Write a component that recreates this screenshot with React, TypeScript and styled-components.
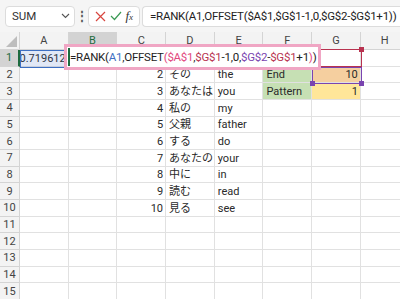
import React from "react";
import styled, { createGlobalStyle } from "styled-components";

const GlobalStyle = createGlobalStyle`
  html, body { margin: 0; padding: 0; background: #fff; }
  body { font-family: Roboto, "Noto Sans CJK JP", sans-serif; overflow: hidden; }
`;

const COL_W = 48.7;
const ROW_H = 16.67;
const HEAD_H = 18;
const ROWHEAD_W = 20;
const COLS = ["A", "B", "C", "D", "E", "F", "G", "H"];

const REF_BLUE = "#3d6fc2";
const REF_PINK = "#e2477e";
const REF_RED = "#b8324f";
const REF_PURPLE = "#7a44b0";

type Seg = { t: string; c?: string };
const formula: Seg[] = [
  { t: "=RANK(" },
  { t: "A1", c: REF_BLUE },
  { t: ",OFFSET" },
  { t: "(", c: REF_PINK },
  { t: "$A$1", c: REF_PINK },
  { t: "," },
  { t: "$G$1", c: REF_RED },
  { t: "-1,0," },
  { t: "$G$2", c: REF_PURPLE },
  { t: "-" },
  { t: "$G$1", c: REF_RED },
  { t: "+1" },
  { t: ")", c: REF_PINK },
  { t: ")" },
];

const data: Record<number, { n: string; jp: string; en: string }> = {
  2: { n: "2", jp: "その", en: "the" },
  3: { n: "3", jp: "あなたは", en: "you" },
  4: { n: "4", jp: "私の", en: "my" },
  5: { n: "5", jp: "父親", en: "father" },
  6: { n: "6", jp: "する", en: "do" },
  7: { n: "7", jp: "あなたの", en: "your" },
  8: { n: "8", jp: "中に", en: "in" },
  9: { n: "9", jp: "読む", en: "read" },
  10: { n: "10", jp: "見る", en: "see" },
};

const Page = styled.div`
  width: 400px;
  height: 299px;
  overflow: hidden;
  display: flex;
  flex-direction: column;
`;

const Toolbar = styled.div`
  height: 32px;
  flex: none;
  background: #f5f5f5;
  display: flex;
  align-items: center;
  padding: 0 0 0 5px;
`;

const Box = styled.div`
  height: 21px;
  background: #fff;
  border: 1px solid #dcdcdc;
  border-radius: 4px;
  box-sizing: border-box;
  display: flex;
  align-items: center;
`;

const NameBox = styled(Box)`
  width: 70px;
  padding: 0 4px 0 6px;
  justify-content: space-between;
  font-size: 11.5px;
  color: #333;
`;

const Dots = styled.div`
  width: 13px;
  text-align: center;
  color: #555;
  font-size: 12px;
  font-weight: bold;
  line-height: 1;
`;

const FxBox = styled(Box)`
  width: 52px;
  padding: 0 4px;
  justify-content: space-around;
`;

const FxLabel = styled.span`
  font-family: "Liberation Serif", serif;
  font-style: italic;
  font-size: 13px;
  color: #333;
  & > sub {
    font-size: 9px;
    vertical-align: baseline;
  }
`;

const FormulaBox = styled(Box)`
  flex: 1;
  margin-left: 2px;
  padding-left: 7px;
  border-right: none;
  border-radius: 4px 0 0 4px;
  font-size: 11.5px;
  letter-spacing: -0.25px;
  color: #222;
  white-space: nowrap;
  overflow: hidden;
`;

const Sheet = styled.div`
  position: relative;
  display: grid;
  grid-template-columns: ${ROWHEAD_W}px repeat(${COLS.length}, ${COL_W}px);
  grid-template-rows: ${HEAD_H}px;
  grid-auto-rows: ${ROW_H}px;
  font-size: 11px;
  color: #2a2a2a;
`;

const Corner = styled.div`
  position: relative;
  background: #f3f3f3;
  border-right: 1px solid #d4d4d4;
  border-bottom: 1px solid #d4d4d4;
  box-sizing: border-box;
  &::after {
    content: "";
    position: absolute;
    right: 2px;
    bottom: 2px;
    border-left: 11px solid transparent;
    border-bottom: 11px solid #bdbdbd;
  }
`;

const ColHead = styled.div<{ $sel?: boolean }>`
  background: ${(p) => (p.$sel ? "#d3d3d3" : "#f3f3f3")};
  color: ${(p) => (p.$sel ? "#1d6b3f" : "#444")};
  border-right: 1px solid #d4d4d4;
  border-bottom: ${(p) => (p.$sel ? "2px solid #1d6b3f" : "1px solid #d4d4d4")};
  box-sizing: border-box;
  display: flex;
  align-items: center;
  justify-content: center;
  font-size: 11px;
`;

const RowHead = styled.div<{ $sel?: boolean }>`
  background: ${(p) => (p.$sel ? "#d3d3d3" : "#f3f3f3")};
  color: ${(p) => (p.$sel ? "#1d6b3f" : "#444")};
  border-right: ${(p) => (p.$sel ? "2px solid #1d6b3f" : "1px solid #d4d4d4")};
  border-bottom: 1px solid #d4d4d4;
  box-sizing: border-box;
  display: flex;
  align-items: center;
  justify-content: center;
  font-size: 11px;
`;

const Cell = styled.div<{ $bg?: string; $right?: boolean }>`
  background: ${(p) => p.$bg || "#fff"};
  border-right: 1px solid #e1e1e1;
  border-bottom: 1px solid #e1e1e1;
  box-sizing: border-box;
  display: flex;
  align-items: center;
  justify-content: ${(p) => (p.$right ? "flex-end" : "flex-start")};
  padding: 1px 2px 0 3px;
  white-space: nowrap;
  overflow: hidden;
  line-height: 1;
`;

const RefBox = styled.div<{ $color: string; $fill?: string }>`
  position: absolute;
  box-sizing: border-box;
  border: 1px solid ${(p) => p.$color};
  background: ${(p) => p.$fill || "transparent"};
  pointer-events: none;
`;

const Handle = styled.div<{ $color: string }>`
  position: absolute;
  width: 5px;
  height: 5px;
  background: ${(p) => p.$color};
`;

const ActiveCell = styled.div`
  position: absolute;
  box-sizing: border-box;
  border: 2px solid #1d6b3f;
`;

const EditBox = styled.div`
  position: absolute;
  left: 64px;
  top: 12px;
  width: 257px;
  height: 26px;
  box-sizing: border-box;
  border: 3px solid #f0a6c4;
  background: #fff;
  display: flex;
  align-items: center;
  padding-left: 3px;
  font-size: 11.5px;
  letter-spacing: -0.25px;
  color: #222;
  white-space: nowrap;
  overflow: hidden;
`;

const EditCaretLine = styled.div`
  position: absolute;
  left: 1px;
  top: 1px;
  bottom: 1px;
  width: 2px;
  background: #1d6b3f;
`;

const cellX = (c: number) => ROWHEAD_W + c * COL_W;
const cellY = (r: number) => HEAD_H + (r - 1) * ROW_H;

function Formula({ colored }: { colored: boolean }) {
  return (
    <>
      {formula.map((s, i) => (
        <span key={i} style={colored && s.c ? { color: s.c } : undefined}>
          {s.t}
        </span>
      ))}
    </>
  );
}

function cellContent(r: number, c: number) {
  const col = COLS[c];
  const d = data[r];
  if (r === 1 && col === "A") return <Cell key={c} $right>0.719612</Cell>;
  if (r === 2 && col === "F") return <Cell key={c} $bg="#c6e0b4">End</Cell>;
  if (r === 3 && col === "F") return <Cell key={c} $bg="#c6e0b4">Pattern</Cell>;
  if (r === 2 && col === "G") return <Cell key={c} $bg="#f5cf9f" $right>10</Cell>;
  if (r === 3 && col === "G") return <Cell key={c} $bg="#ffe699" $right>1</Cell>;
  if (d && col === "C") return <Cell key={c} $right>{d.n}</Cell>;
  if (d && col === "D") return <Cell key={c}>{d.jp}</Cell>;
  if (d && col === "E") return <Cell key={c}>{d.en}</Cell>;
  return <Cell key={c} />;
}

export default function App() {
  const rows = Array.from({ length: 15 }, (_, i) => i + 1);
  return (
    <Page>
      <GlobalStyle />
      <Toolbar>
        <NameBox>
          <span>SUM</span>
          <svg width="9" height="6" viewBox="0 0 9 6">
            <path d="M1 1l3.5 3.5L8 1" fill="none" stroke="#555" strokeWidth="1.1" />
          </svg>
        </NameBox>
        <Dots>⋮</Dots>
        <FxBox>
          <svg width="11" height="11" viewBox="0 0 11 11">
            <path d="M1 1l9 9M10 1l-9 9" stroke="#d8463f" strokeWidth="1.2" />
          </svg>
          <svg width="12" height="10" viewBox="0 0 12 10">
            <path d="M1 5l3.5 3.5L11 1" fill="none" stroke="#3b9a55" strokeWidth="1.2" />
          </svg>
          <FxLabel>
            f<sub>x</sub>
          </FxLabel>
        </FxBox>
        <FormulaBox>
          <Formula colored={false} />
        </FormulaBox>
      </Toolbar>
      <Sheet>
        <Corner />
        {COLS.map((c) => (
          <ColHead key={c} $sel={c === "B"}>
            {c}
          </ColHead>
        ))}
        {rows.map((r) => (
          <React.Fragment key={r}>
            <RowHead $sel={r === 1}>{r}</RowHead>
            {COLS.map((_, c) => cellContent(r, c))}
          </React.Fragment>
        ))}

        <RefBox
          $color={REF_BLUE}
          $fill="rgba(68,114,196,0.16)"
          style={{ left: cellX(0), top: cellY(1), width: COL_W, height: ROW_H + 1 }}
        />
        <RefBox
          $color={REF_RED}
          style={{ left: cellX(6), top: cellY(1) - 1, width: COL_W + 1, height: ROW_H + 1 }}
        />
        <Handle $color={REF_RED} style={{ left: cellX(7) - 2, top: cellY(1) - 3 }} />
        <RefBox
          $color={REF_PURPLE}
          style={{ left: cellX(6), top: cellY(2), width: COL_W + 1, height: ROW_H + 1 }}
        />
        <Handle $color={REF_PURPLE} style={{ left: cellX(6) - 2, top: cellY(3) - 2 }} />
        <Handle $color={REF_PURPLE} style={{ left: cellX(7) - 2, top: cellY(3) - 2 }} />
        <ActiveCell style={{ left: cellX(1) - 1, top: cellY(1) - 1, width: COL_W + 2, height: ROW_H + 2 }} />

        <EditBox>
          <EditCaretLine />
          <Formula colored />
        </EditBox>
      </Sheet>
    </Page>
  );
}
